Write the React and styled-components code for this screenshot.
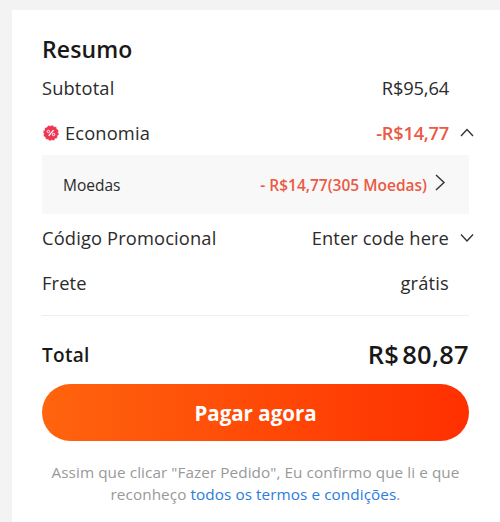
import React from 'react'
import styled, { createGlobalStyle } from 'styled-components'

const GlobalStyle = createGlobalStyle`
  * {
    box-sizing: border-box;
  }

  body {
    margin: 0;
    overflow: hidden;
    background: #f3f3f3;
    color: #2b2b2b;
    font-family: 'Open Sans', 'Noto Sans', sans-serif;
  }
`

const Page = styled.div`
  height: 522px;
  padding: 10px 0 0 11.5px;
`

const Card = styled.section`
  height: 100%;
  padding: 23px 31px 0 30.5px;
  background: white;
`

const Title = styled.h2`
  margin: 0;
  color: #191919;
  font-size: 23px;
  font-weight: 650;
  line-height: 32px;
  letter-spacing: 0.1px;
`

const Row = styled.div`
  display: flex;
  align-items: center;
  height: 45px;
  font-size: 18.3px;
  line-height: 24px;
`

const Label = styled.span`
  flex: 1;
  display: flex;
  align-items: center;
  letter-spacing: ${props => props.$spacing || '0.15px'};
`

const Value = styled.span`
  color: ${props => props.$discount ? '#ea5a44' : 'inherit'};
  font-weight: ${props => props.$discount ? 600 : 400};
  letter-spacing: ${props => props.$spacing || '0'};
`

const Toggle = styled.span`
  display: flex;
  justify-content: flex-end;
  width: 20px;
  margin-right: -5px;
  margin-left: 5px;
`

const Details = styled.div`
  display: flex;
  align-items: center;
  height: 59px;
  padding: 0 23px 0 21px;
  background: #f8f8f8;
  font-size: 15.5px;
  line-height: 20px;
`

const Lines = styled.div`
  margin-top: ${props => props.$top || '0'};
`

const Total = styled.div`
  display: flex;
  align-items: center;
  justify-content: space-between;
  height: 69px;
  padding-top: 8px;
  border-top: 1px solid #eee;
  color: #191919;
  font-size: 19px;
  font-weight: 600;
  letter-spacing: 0.3px;
`

const TotalLabel = styled.span`
  padding-top: 2px;
`

const TotalPrice = styled.span`
  font-size: 25.5px;
  font-weight: 650;
  line-height: 30px;
`

const Currency = styled.span`
  margin-right: 3px;
`

const PayButton = styled.button`
  display: block;
  width: 100%;
  height: 57px;
  padding: 0;
  border: 0;
  border-radius: 29px;
  background: linear-gradient(90deg, #ff640e, #ff3000);
  color: white;
  font-family: inherit;
  font-size: 20.5px;
  font-weight: 700;
`

const Terms = styled.p`
  margin: 20px -10px 0;
  color: #999;
  font-size: 15.3px;
  line-height: 22px;
  letter-spacing: 0.07px;
  text-align: center;
`

const TermsLink = styled.a`
  color: #2c7be0;
`

const DiscountSvg = styled.svg`
  margin: 0 6px 0 1px;
`

const DiscountIcon = () => (
  <DiscountSvg width='16' height='16' viewBox='0 0 16 16'>
    <circle cx='8' cy='8' r='7' fill='#ef3554' />
    <circle cx='8' cy='8' r='7' fill='none' stroke='#ef3554' strokeWidth='1.4' strokeDasharray='2.2 1.46' />
    <path d='M10.5 5.1 5.7 10.9' stroke='white' strokeWidth='1.3' />
    <circle cx='5.4' cy='6.5' r='1.2' fill='none' stroke='white' />
    <circle cx='10.6' cy='9.5' r='1.2' fill='none' stroke='white' />
  </DiscountSvg>
)

const Chevron = ({ d, width, height }) => (
  <svg width={width} height={height} viewBox={`0 0 ${width} ${height}`} fill='none' stroke='#333' strokeWidth='1.4'>
    <path d={d} />
  </svg>
)

export default function App () {
  return (
    <Page>
      <GlobalStyle />
      <Card>
        <Title>Resumo</Title>
        <Row>
          <Label>Subtotal</Label>
          <Value $spacing='-0.15px'>R$95,64</Value>
          <Toggle />
        </Row>
        <Row>
          <Label><DiscountIcon />Economia</Label>
          <Value $discount $spacing='-0.25px'>-R$14,77</Value>
          <Toggle><Chevron width={14} height={10} d='M1 8 7 1.5 13 8' /></Toggle>
        </Row>
        <Details>
          <Label $spacing='0px'>Moedas</Label>
          <Value $discount>- R$14,77(305 Moedas)</Value>
          <Chevron width={19} height={23} d='M9 2 17 9.5 9 17' />
        </Details>
        <Lines $top='1px'>
          <Row>
            <Label>Código Promocional</Label>
            <Value $spacing='0.12px'>Enter code here</Value>
            <Toggle><Chevron width={14} height={10} d='M1 1.5 7 8 13 1.5' /></Toggle>
          </Row>
          <Row>
            <Label>Frete</Label>
            <Value $spacing='0.2px'>grátis</Value>
            <Toggle />
          </Row>
        </Lines>
        <Lines $top='10px'>
          <Total>
            <TotalLabel>Total</TotalLabel>
            <TotalPrice><Currency>R$</Currency>80,87</TotalPrice>
          </Total>
          <PayButton>Pagar agora</PayButton>
        </Lines>
        <Terms>
          Assim que clicar "Fazer Pedido", Eu confirmo que li e que<br />
          reconheço <TermsLink>todos os termos e condições</TermsLink>.
        </Terms>
      </Card>
    </Page>
  )
}
